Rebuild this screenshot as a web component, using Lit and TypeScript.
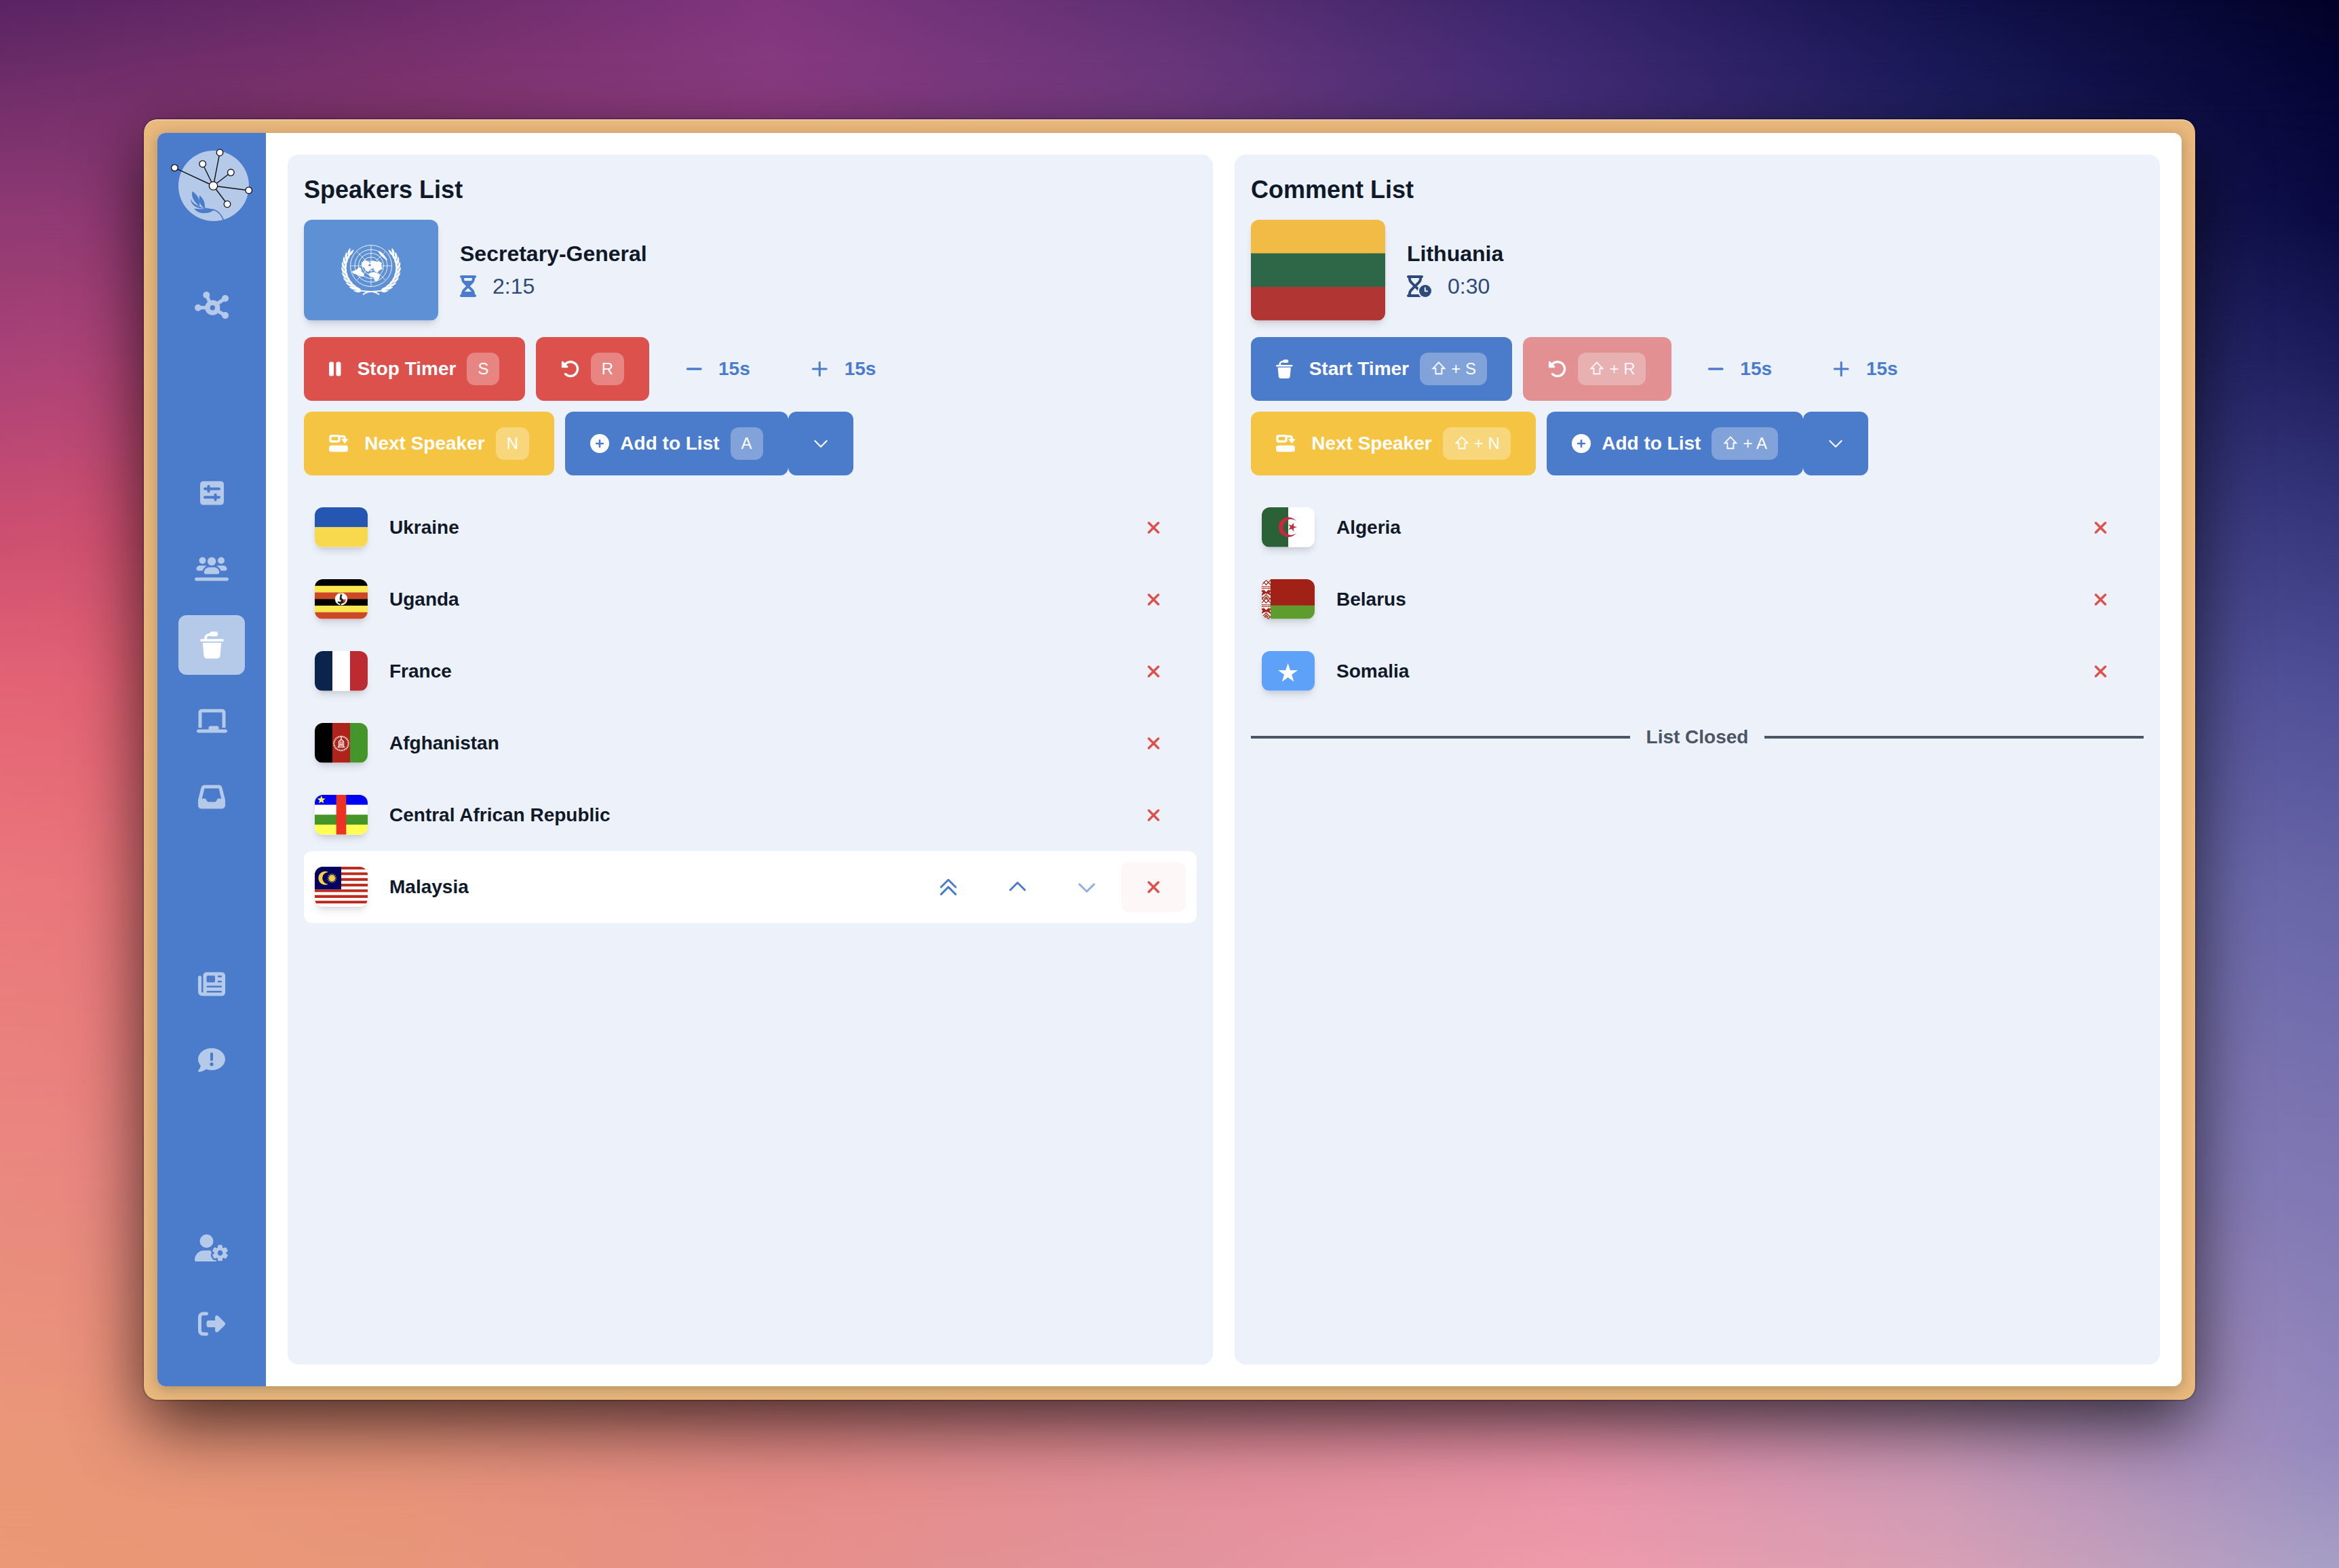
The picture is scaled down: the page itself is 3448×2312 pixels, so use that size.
import { LitElement, html, svg, css, TemplateResult } from "lit";
import { customElement, property } from "lit/decorators.js";

/* ---------- wallpaper ---------- */

const meshColumns = [0, 17, 33, 50, 67, 83, 100];
const meshRows: { y: number; colors: string[] }[] = [
  { y: 0, colors: ["#592463", "#6b2b6a", "#80367d", "#5f3073", "#36246a", "#12124c", "#020228"] },
  { y: 7, colors: ["#75306b", "#82366f", "#8b3b80", "#703a80", "#462e79", "#1e1e5e", "#050538"] },
  { y: 14, colors: ["#913a74", "#8f3a74", "#8c3b80", "#743d85", "#4d3480", "#2a2a6c", "#0a0a42"] },
  { y: 24, colors: ["#ad4377", "#b84874", "#a04480", "#804690", "#5a4090", "#38387c", "#1f1f60"] },
  { y: 34, colors: ["#cd4f70", "#d2536f", "#b85080", "#905090", "#6a4c98", "#48488c", "#38387f"] },
  { y: 44, colors: ["#e46475", "#df6072", "#c86080", "#a06090", "#8060a0", "#5c5a9c", "#4f4f98"] },
  { y: 57, colors: ["#ea787c", "#e67378", "#d07080", "#b07090", "#9070a0", "#7470ac", "#6866a8"] },
  { y: 76, colors: ["#e9897f", "#e88480", "#d88088", "#c88098", "#b080a8", "#8f80b6", "#8078b4"] },
  { y: 92, colors: ["#ea9778", "#e69379", "#e48a85", "#e28d98", "#e890a6", "#c896b6", "#9389be"] },
  { y: 100, colors: ["#e99974", "#e79679", "#e68f89", "#e2939c", "#ee9aaa", "#d8a0b4", "#a69fc6"] },
];

/* ---------- icons ---------- */

interface IconDef { w: number; h: number; body: TemplateResult }

const p = (w: number, d: string, h = 512): IconDef => ({ w, h, body: svg`<path d=${d} />` });

const podium = svg`<path d="M104 148v-20c0-40 32-66 90-72" fill="none" stroke="currentColor" stroke-width="48"/>
  <rect x="180" y="4" width="156" height="88" rx="44"/>
  <rect x="0" y="144" width="448" height="46" rx="23"/>
  <path d="M48 214H400L378 462c-3 29-26 50-54 50H124c-28 0-51-21-54-50Z"/>`;

const hourglassGlass =
  "M32 0C14.3 0 0 14.3 0 32S14.3 64 32 64V75c0 42.4 16.9 83.1 46.9 113.1L146.7 256 78.9 323.9C48.9 353.9 32 394.6 32 437v11c-17.7 0-32 14.3-32 32s14.3 32 32 32H352c17.7 0 32-14.3 32-32s-14.3-32-32-32V437c0-42.4-16.9-83.1-46.9-113.1L237.3 256l67.9-67.9c30-30 46.9-70.7 46.9-113.1V64c17.7 0 32-14.3 32-32s-14.3-32-32-32H32z";

const icons: Record<string, IconDef> = {
  hub: {
    w: 50, h: 40,
    body: svg`<g stroke="currentColor" stroke-width="5.2" fill="none">
        <path d="M17.3 5l5 11M45 10L33 18M5 23.7h12M45 35L33 28"/>
        <circle cx="26.3" cy="23.7" r="7.4" stroke-width="7.4"/></g>
      <circle cx="17.3" cy="5" r="5"/><circle cx="45" cy="10" r="5.1"/><circle cx="5" cy="23.7" r="5"/><circle cx="45" cy="35" r="5.1"/>`,
  },
  sliders: {
    w: 448, h: 512,
    body: svg`<rect y="32" width="448" height="448" rx="60"/>
      <path class="cut" d="M90 176H358M160 128V224M90 336H358M288 288V384" stroke-width="52" stroke-linecap="round"/>`,
  },
  users: p(640, "M211.2 96a64 64 0 1 0 -128 0 64 64 0 1 0 128 0zM32 256c0 17.7 14.3 32 32 32l85.6 0c10.1-39.4 38.6-71.5 75.8-86.6c-9.7-6-21.2-9.4-33.4-9.4l-96 0c-35.3 0-64 28.7-64 64zm461.6 32l82.4 0c17.7 0 32-14.3 32-32c0-35.3-28.7-64-64-64l-96 0c-11.7 0-22.7 3.1-32.1 8.6c38.1 14.8 67.4 47.3 77.7 87.4zM391.2 226.4c-6.9-1.6-14.2-2.4-21.6-2.4l-96 0c-8.5 0-16.7 1.1-24.5 3.1c-30.8 8.1-55.6 31.1-66.1 60.9c-3.5 10-5.5 20.8-5.5 32c0 17.7 14.3 32 32 32l224 0c17.7 0 32-14.3 32-32c0-11.2-1.9-22-5.5-32c-10.8-30.7-36.8-54.2-68.9-61.6zM563.2 96a64 64 0 1 0 -128 0 64 64 0 1 0 128 0zM321.6 192a80 80 0 1 0 0-160 80 80 0 1 0 0 160zM32 416c-17.7 0-32 14.3-32 32s14.3 32 32 32l576 0c17.7 0 32-14.3 32-32s-14.3-32-32-32L32 416z"),
  podium: { w: 448, h: 512, body: podium },
  board: p(576, "M96 32C60.7 32 32 60.7 32 96V384H96V96H480V384h64V96c0-35.3-28.7-64-64-64H96zM224 384v32H32c-17.7 0-32 14.3-32 32s14.3 32 32 32H544c17.7 0 32-14.3 32-32s-14.3-32-32-32H416V384c0-17.7-14.3-32-32-32H256c-17.7 0-32 14.3-32 32z"),
  inbox: p(512, "M121 32C91.6 32 66 52 58.9 80.5L1.9 308.4C.6 313.5 0 318.7 0 323.9V416c0 35.3 28.7 64 64 64H448c35.3 0 64-28.7 64-64V323.9c0-5.2-.6-10.4-1.9-15.5l-57-227.9C446 52 420.4 32 391 32H121zm0 64H391l48 192H387.8c-12.1 0-23.2 6.8-28.6 17.7l-14.3 28.6c-5.4 10.8-16.5 17.7-28.6 17.7H195.8c-12.1 0-23.2-6.8-28.6-17.7l-14.3-28.6c-5.4-10.8-16.5-17.7-28.6-17.7H73L121 96z"),
  news: p(512, "M96 96c0-35.3 28.7-64 64-64H448c35.3 0 64 28.7 64 64V416c0 35.3-28.7 64-64 64H80c-44.2 0-80-35.8-80-80V128c0-17.7 14.3-32 32-32s32 14.3 32 32V400c0 8.8 7.2 16 16 16s16-7.2 16-16V96zm64 24v80c0 13.3 10.7 24 24 24H296c13.3 0 24-10.7 24-24V120c0-13.3-10.7-24-24-24H184c-13.3 0-24 10.7-24 24zm208-8c0 8.8 7.2 16 16 16h48c8.8 0 16-7.2 16-16s-7.2-16-16-16H384c-8.8 0-16 7.2-16 16zm0 96c0 8.8 7.2 16 16 16h48c8.8 0 16-7.2 16-16s-7.2-16-16-16H384c-8.8 0-16 7.2-16 16zM160 304c0 8.8 7.2 16 16 16H432c8.8 0 16-7.2 16-16s-7.2-16-16-16H176c-8.8 0-16 7.2-16 16zm0 96c0 8.8 7.2 16 16 16H432c8.8 0 16-7.2 16-16s-7.2-16-16-16H176c-8.8 0-16 7.2-16 16z"),
  comment: {
    w: 512, h: 512,
    body: svg`<path d="M512 240c0 114.9-114.6 208-256 208c-37.1 0-72.3-6.4-104.1-17.9c-11.9 8.7-31.3 20.6-54.3 30.6C73.6 471.1 44.7 480 16 480c-6.5 0-12.3-3.9-14.8-9.9c-2.5-6-1.1-12.8 3.4-17.4l.3-.3c.3-.3 .7-.7 1.3-1.4c1.1-1.2 2.8-3.1 4.9-5.7c4.1-5 9.6-12.4 15.2-21.6c10-16.6 19.5-38.4 21.4-62.9C17.7 326.8 0 285.1 0 240C0 125.1 114.6 32 256 32s256 93.1 256 208z"/>
      <path class="cut" d="M256 138V248" stroke-width="52" stroke-linecap="round"/>
      <circle class="hole" cx="256" cy="336" r="34"/>`,
  },
  usergear: p(640, "M224 0a128 128 0 1 1 0 256A128 128 0 1 1 224 0zM178.3 304l91.4 0c11.8 0 23.4 1.2 34.5 3.3c-2.1 18.5 7.4 35.6 21.8 44.8c-16.6 10.6-26.7 31.6-20 53.3c4 12.9 9.4 25.5 16.4 37.6s15.2 23.1 24.4 33c15.7 16.9 39.6 18.4 57.2 8.7l0 .9c0 9.2 2.7 18.5 7.9 26.3L29.7 512C13.3 512 0 498.7 0 482.3C0 383.8 79.8 304 178.3 304zM436 218.2c0-7 4.5-13.3 11.3-14.8c10.5-2.4 21.5-3.7 32.7-3.7s22.2 1.3 32.7 3.7c6.8 1.5 11.3 7.8 11.3 14.8l0 30.6c7.9 3.4 15.4 7.7 22.3 12.8l24.9-14.3c6.1-3.5 13.7-2.7 18.5 2.4c7.6 8.1 14.3 17.2 20.1 27.2s10.3 20.4 13.5 31c2.1 6.7-1.1 13.7-7.2 17.2l-25 14.4c.4 4 .7 8.1 .7 12.3s-.2 8.2-.7 12.3l25 14.4c6.1 3.5 9.2 10.5 7.2 17.2c-3.3 10.6-7.8 21-13.5 31s-12.5 19.1-20.1 27.2c-4.8 5.1-12.5 5.9-18.5 2.4l-24.9-14.3c-6.9 5.1-14.3 9.4-22.3 12.8l0 30.6c0 7-4.5 13.3-11.3 14.8c-10.5 2.4-21.5 3.7-32.7 3.7s-22.2-1.3-32.7-3.7c-6.8-1.5-11.3-7.8-11.3-14.8l0-30.5c-8-3.4-15.6-7.7-22.5-12.9l-24.7 14.3c-6.1 3.5-13.7 2.7-18.5-2.4c-7.6-8.1-14.3-17.2-20.1-27.2s-10.3-20.4-13.5-31c-2.1-6.7 1.1-13.7 7.2-17.2l24.8-14.3c-.4-4.1-.7-8.2-.7-12.4s.2-8.3 .7-12.4L343.8 325c-6.1-3.5-9.2-10.5-7.2-17.2c3.3-10.6 7.7-21 13.5-31s12.5-19.1 20.1-27.2c4.8-5.1 12.4-5.9 18.5-2.4l24.8 14.3c6.9-5.1 14.5-9.4 22.5-12.9l0-30.5zm92.1 133.5a48.1 48.1 0 1 0 -96.1 0 48.1 48.1 0 1 0 96.1 0z"),
  logout: p(512, "M377.9 105.9L500.7 228.7c7.2 7.2 11.3 17.1 11.3 27.3s-4.1 20.1-11.3 27.3L377.9 406.1c-6.4 6.4-15 9.9-24 9.9c-18.7 0-33.9-15.2-33.9-33.9l0-62.1-128 0c-17.7 0-32-14.3-32-32l0-64c0-17.7 14.3-32 32-32l128 0 0-62.1c0-18.7 15.2-33.9 33.9-33.9c9 0 17.6 3.6 24 9.9zM160 96L96 96c-17.7 0-32 14.3-32 32l0 256c0 17.7 14.3 32 32 32l64 0c17.7 0 32 14.3 32 32s-14.3 32-32 32l-64 0c-53 0-96-43-96-96L0 128C0 75 43 32 96 32l64 0c17.7 0 32 14.3 32 32s-14.3 32-32 32z"),
  pause: { w: 320, h: 512, body: svg`<rect y="64" width="128" height="384" rx="46"/><rect x="192" y="64" width="128" height="384" rx="46"/>` },
  reset: p(512, "M48.5 224L40 224c-13.3 0-24-10.7-24-24L16 72c0-9.7 5.8-18.5 14.8-22.2s19.3-1.7 26.2 5.2L98.6 96.6c87.6-86.5 228.7-86.2 315.8 1c87.5 87.5 87.5 229.3 0 316.8s-229.3 87.5-316.8 0c-12.5-12.5-12.5-32.8 0-45.3s32.8-12.5 45.3 0c62.5 62.5 163.8 62.5 226.3 0s62.5-163.8 0-226.3c-62.2-62.2-162.7-62.5-225.3-1L185 183c6.9 6.9 8.9 17.2 5.2 26.2s-12.5 14.8-22.2 14.8L48.5 224z"),
  minus: { w: 448, h: 512, body: svg`<path d="M48 256H400" fill="none" stroke="currentColor" stroke-width="66" stroke-linecap="round"/>` },
  plus: { w: 448, h: 512, body: svg`<path d="M44 256H404M224 80V432" fill="none" stroke="currentColor" stroke-width="56" stroke-linecap="round"/>` },
  next: {
    w: 28, h: 28,
    body: svg`<path d="M2 4.4c0-1 .6-1.8 1.8-1.8H13c1 0 2 .8 2 1.8V9c0 1-1 1.9-2 1.9H3.8C2.600 10.900 2 10 2 9Z" fill="none" stroke="currentColor" stroke-width="3.4"/>
      <path d="M14 3.400H20.500Q23.300 3.400 23.300 6V8" fill="none" stroke="currentColor" stroke-width="3.2"/>
      <path d="M18.600 7.600H28L23.300 13.600Z" stroke="currentColor" stroke-width=".8" stroke-linejoin="round"/>
      <rect y="16.700" width="28" height="9.600" rx="3.600"/>`,
  },
  add: {
    w: 512, h: 512,
    body: svg`<circle cx="256" cy="256" r="256"/><path class="cut" d="M168 256H344M256 168V344" stroke-width="48" stroke-linecap="round"/>`,
  },
  caret: { w: 512, h: 512, body: svg`<path d="M98 184L256 342L414 184" fill="none" stroke="currentColor" stroke-width="40" stroke-linecap="round" stroke-linejoin="round"/>` },
  down: { w: 512, h: 512, body: svg`<path d="M60 180L256 376L452 180" fill="none" stroke="currentColor" stroke-width="54" stroke-linecap="round" stroke-linejoin="round"/>` },
  up: { w: 512, h: 512, body: svg`<path d="M60 334L256 138L452 334" fill="none" stroke="currentColor" stroke-width="54" stroke-linecap="round" stroke-linejoin="round"/>` },
  top: { w: 512, h: 512, body: svg`<path d="M60 256L256 60L452 256M60 450L256 254L452 450" fill="none" stroke="currentColor" stroke-width="54" stroke-linecap="round" stroke-linejoin="round"/>` },
  close: p(384, "M342.6 150.6c12.5-12.5 12.5-32.8 0-45.3s-32.8-12.5-45.3 0L192 210.7 86.6 105.4c-12.5-12.5-32.8-12.5-45.3 0s-12.5 32.8 0 45.3L146.7 256 41.4 361.4c-12.5 12.5-12.5 32.8 0 45.3s32.8 12.5 45.3 0L192 301.3 297.4 406.6c12.5 12.5 32.8 12.5 45.3 0s12.5-32.8 0-45.3L237.3 256 342.6 150.6z"),
  hourglass: p(384, hourglassGlass + "M96 75V64H288V75c0 19-5.6 37.4-16 53H112c-10.3-15.6-16-34-16-53zm16 309c3.5-5.3 7.6-10.3 12.1-14.9L192 301.3l67.9 67.9c4.6 4.6 8.6 9.6 12.2 14.9H112z"),
  hourglassclock: {
    w: 576, h: 512,
    body: svg`<path fill-rule="evenodd" d=${hourglassGlass + "M96 64H288V75c0 25.5-10.1 49.9-28.1 67.9L192 210.7l-67.9-67.9C106.1 124.8 96 100.4 96 75V64zM96 448v-11c0-25.5 10.1-49.9 28.1-67.9L192 301.3l67.9 67.9c18 18 28.1 42.4 28.1 67.9v11H96z"}/>
      <circle cx="432" cy="368" r="176" fill="#ecf1fa"/><circle cx="432" cy="368" r="144"/>
      <path d="M428 296V372H480" fill="none" stroke="#ecf1fa" stroke-width="32" stroke-linecap="round" stroke-linejoin="round"/>`,
  },
  shift: { w: 23.5, h: 24, body: svg`<path d="M11.900 2.400L20.300 11.200H16.400V19.300H7.400V11.200H3.500Z" fill="none" stroke="currentColor" stroke-width="1.900"/>` },
};

const icon = (name: string, height: number, cls = "") => {
  const d = icons[name];
  return html`<svg class="icon ${cls}" width=${(d.w / d.h) * height} height=${height} viewBox="0 0 ${d.w} ${d.h}" fill="currentColor">${d.body}</svg>`;
};

/* ---------- flags, drawn on an 80 x 60 field ---------- */

const star = (cx: number, cy: number, r: number, fill: string, turn = -90, points = 5, inner = 0.382) => {
  const pts: string[] = [];
  for (let i = 0; i < points * 2; i++) {
    const a = ((turn + (i * 180) / points) * Math.PI) / 180;
    const q = i % 2 ? r * inner : r;
    pts.push(`${(cx + q * Math.cos(a)).toFixed(2)},${(cy + q * Math.sin(a)).toFixed(2)}`);
  }
  return svg`<polygon points=${pts.join(" ")} fill=${fill} />`;
};

const bandsH = (colors: string[]) =>
  colors.map((c, i) => svg`<rect y=${(60 / colors.length) * i} width="80" height=${60 / colors.length + (i < colors.length - 1 ? 0.3 : 0)} fill=${c}/>`);
const bandsV = (colors: string[]) =>
  colors.map((c, i) => svg`<rect x=${(80 / colors.length) * i} width=${80 / colors.length + 0.1} height="60" fill=${c}/>`);

const unEmblem = () => {
  const leaves: TemplateResult[] = [];
  // laurel branch: pairs of leaves following an arc left of the globe
  for (let i = 0; i < 10; i++) {
    const t = 112 + i * 11;
    const a = (t * Math.PI) / 180;
    const x = 99 + 39 * Math.cos(a);
    const y = 71.5 + 36.5 * Math.sin(a);
    leaves.push(svg`<g transform="translate(${x} ${y}) rotate(${t})">
      <path d="M0 0C3.600 1 4.600 6 3.600 11C1.300 9 -.4 5 0 0Z"/><path d="M-.6 0C-3.800 2 -4 7 -2.400 11.500C-.1 9 .4 4 -.6 0Z"/></g>`);
  }
  const branch = svg`<g>${leaves}<path d="M111 110.500C101 101 86 111 70 98" fill="none" stroke="#fff" stroke-width="1.800"/></g>`;
  return svg`<rect width="198" height="148.500" fill="#5e90d6"/>
    <g fill="#fff">${branch}<g transform="translate(198 0) scale(-1 1)">${branch}</g></g>
    <g fill="none" stroke="#fff" stroke-width="1" opacity=".9">
      ${[7, 13, 18.5, 24, 30.5].map((r) => svg`<circle cx="99" cy="68" r=${r}/>`)}
      <path d="M99 37.500V98.500M68.500 68H129.500M77.400 46.400L120.600 89.600M120.600 46.400L77.400 89.600" stroke-width=".8"/></g>
    <g fill="#fff">
      <path d="M85 63l5-3 5 1 2 3 4-4 6 2 4-1 4 3-1 4 2 4-5 3-3 3-4-2-1-5-5 2-3 4-4-2-2-4-4-3Z"/>
      <path d="M71 76l6-2 4-4 3 1 1 5 4 4-1 4-6-1-4-2-6-2Z"/>
      <path d="M96 79l7-2 6 2 3 3-1 5-4 4-3-1-1-5-5-1-3-3Z"/>
      <path d="M109 46l4 1 6 6 4 6-1 1-5-4-5-5Z"/></g>
    <circle cx="97" cy="67" r="1.800" fill="#5e90d6"/>`;
};

const flags: Record<string, () => unknown> = {
  lithuania: () => bandsH(["#f2bb46", "#2d6748", "#b03533"]),
  ukraine: () => bandsH(["#2556b2", "#f8d84c"]),
  uganda: () => svg`${bandsH(["#000", "#fbe74f", "#cd4826", "#000", "#fbe74f", "#cd4826"])}
    <circle cx="40" cy="30" r="9.400" fill="#fff"/>
    <path d="M39 22.500l3 1.500-1.500 2 .5 3 4 3-1 4-4.500 1.500 1 2h-2l-.5-2-3.500-2 .5-2 4 .5 1-1.500-2.500-2 .5-4Z" fill="#222"/>
    <path d="M43 31l4-1-1 5-2.500 1Z" fill="#cd4826"/><path d="M37 22l3-2 2 1.500-2 1Z" fill="#cdb53a"/>`,
  france: () => bandsV(["#0a244c", "#ffffff", "#bc2b31"]),
  afghanistan: () => svg`${bandsV(["#000", "#ae241a", "#45962a"])}
    <g fill="none" stroke="#fff" opacity=".85">
      <ellipse cx="40" cy="31" rx="11" ry="10.600" stroke-width="2.400" stroke-dasharray="1.800 .9"/>
      <path d="M34.500 36.500h11M36 33.500h8M36.500 36v-8l3.500-3 3.500 3v8M40 20v5" stroke-width="1.600"/>
      <path d="M38.500 29h3v3h-3z" stroke-width="1.200"/></g>`,
  car: () => svg`${bandsH(["#0002f5", "#ffffff", "#449629", "#ffff54"])}
    <rect x="32.500" width="15" height="60" fill="#eb3223"/>${star(10, 7.6, 6.4, "#ffff54", -90, 5, 0.42)}`,
  malaysia: () => svg`${Array.from({ length: 14 }, (_, i) => svg`<rect y=${(60 / 14) * i} width="80" height=${60 / 14} fill=${i % 2 ? "#fff" : "#bd2a1e"}/>`)}
    <rect width="40" height="34.300" fill="#000060"/>
    <path d="M20.500 8.200A10.200 10.200 0 1 0 20.500 26.200A9 9 0 1 1 20.500 8.200Z" fill="#f7d048"/>
    ${star(26, 17.3, 8, "#f7d048", -90, 14, 0.5)}`,
  algeria: () => svg`${bandsV(["#2a6137", "#ffffff"])}
    <path d="M52.200 20.800A15 15 0 1 0 52.200 39.200A12 12 0 1 1 52.200 20.800Z" fill="#c32a3c"/>
    ${star(46, 30, 7, "#c32a3c", 0)}`,
  belarus: () => svg`<rect width="80" height="40" fill="#a22116"/><rect y="39.700" width="80" height="20.300" fill="#5d9c2d"/>
    <rect width="13.300" height="60" fill="#fff"/>
    <g fill="none" stroke="#a22116">
      ${[0, 27.5].map((y) => svg`<g transform="translate(0 ${y})" stroke-width="1.300">
        <path d="M0 1.500L3.300 5L6.600 1.500L10 5L13.300 1.500M0 8.500L3.300 5L6.600 8.500L10 5L13.300 8.500"/>
        <path d="M0 11.300h13.300M0 13.800h13.300" stroke-width="1.500" stroke-dasharray="1.700 .6"/>
        <path d="M0 17L3.300 20.500L0 24M13.300 17L10 20.500L13.300 24M3.600 22.800V18L6.600 21L9.700 18V22.800" stroke-width="2.400"/>
        <path d="M0 30L6.600 23.500L13.300 30M3.300 30L6.600 26.800L10 30M0 26.500L1.800 28"/></g>`)}
      <path d="M0 56.500L3.300 60M6.600 56.500L3.300 60M6.600 56.500L10 60M13.300 56.500L10 60" stroke-width="1.300"/></g>`,
  somalia: () => svg`<rect width="80" height="60" fill="#5da2f8"/>${star(39.6, 33.8, 15.6, "#fff")}`,
};

const flag = (name: string, cls: string) =>
  name === "un"
    ? html`<svg class=${cls} viewBox="0 0 198 148.500" preserveAspectRatio="none">${unEmblem()}</svg>`
    : html`<svg class=${cls} viewBox="0 0 80 60" preserveAspectRatio="none">${flags[name]()}</svg>`;

/* ---------- sidebar ---------- */

@customElement("side-nav")
export class SideNav extends LitElement {
  static styles = css`
    :host { display: flex; flex-direction: column; width: 160px; flex: none; background: #4b7bcb; color: #b5c9e9; border-radius: 12px 0 0 12px; }
    .logo { display: block; width: 160px; height: 210px; flex: none; }
    .groups { display: flex; flex-direction: column; gap: 188.6px; }
    .group { display: flex; flex-direction: column; gap: 24px; align-items: center; }
    .item { display: flex; align-items: center; justify-content: center; width: 98px; height: 88px; border-radius: 12px; }
    .active { background: #b5c9e9; color: #fff; }
    .icon { display: block; }
    .cut { fill: none; stroke: #4b7bcb; }
    .hole { fill: #4b7bcb; }
  `;
  private groups = [["hub"], ["sliders", "users", "podium", "board", "inbox"], ["news", "comment"], ["usergear", "logout"]];
  render() {
    const nodes = [[25.4, 51.4], [66.7, 45.7], [92, 29], [108.3, 58.3], [134.7, 84.7], [103, 105]];
    return html`
      <svg class="logo" viewBox="0 0 160 210">
        <circle cx="83" cy="78" r="52" fill="#b5c9e9" />
        <g fill="#4b7bcb">
          <path d="M51.500 86C60 92 63.500 99 62 108.500C54 101 49.500 95 51.500 86Z" />
          <path d="M49 97C52 105 59 107 69 111.500C58 112 49 106 49 97Z" />
          <path d="M62.500 92C68.500 98 70.500 103 70 112C63 107 60 100 62.500 92Z" />
          <path d="M54 111.500C62 113 70 111 84 113.500C75 120.500 60 120 54 111.500Z" />
        </g>
        <path d="M68 111L84 113.500Q93 117 97.500 128.500" fill="none" stroke="#4b7bcb" stroke-width="1.800" />
        <g stroke="#111" stroke-width="1.400">${nodes.map(([x, y]) => svg`<path d="M82.500 78L${x} ${y}"/>`)}</g>
        <g fill="#fff" stroke="#111" stroke-width="1.300">
          ${nodes.map(([x, y]) => svg`<circle cx=${x} cy=${y} r="4.800"/>`)}
          <circle cx="82.500" cy="78" r="6.200" />
        </g>
      </svg>
      <nav class="groups">
        ${this.groups.map((g) => html`<div class="group">
          ${g.map((n) => html`<div class="item ${n === "podium" ? "active" : ""}">${icon(n, 40)}</div>`)}
        </div>`)}
      </nav>`;
  }
}

/* ---------- speaker panel ---------- */

interface Row { flag: string; name: string; hover?: boolean }
interface PanelData {
  title: string; flag: string; speaker: string; time: string; timeIcon: string;
  running: boolean; shift: boolean; closed: boolean; rows: Row[];
}

@customElement("speaker-panel")
export class SpeakerPanel extends LitElement {
  static styles = css`
    :host { display: flex; flex-direction: column; flex: 1 1 0; min-width: 0; box-sizing: border-box; padding: 24px; border-radius: 16px; background: #ecf1fa; color: #101929; }
    .icon { display: block; flex: none; }
    .title { margin: 0; font-size: 36px; line-height: 56px; font-weight: 700; }
    .current { display: flex; align-items: center; gap: 32px; margin-top: 16px; }
    .bigflag, .smallflag { display: block; flex: none; border-radius: 12px; box-shadow: 0 8px 12px -2px rgba(0, 0, 0, .1), 0 4px 8px -4px rgba(0, 0, 0, .1); }
    .bigflag { width: 198px; height: 148.5px; }
    .smallflag { width: 78px; height: 58.5px; }
    .who { font-size: 32px; line-height: 48px; }
    .name { font-weight: 700; }
    .time { display: flex; align-items: center; gap: 24px; color: #2e4a7a; }
    .run { color: #4b7bcb; }
    .buttons { display: flex; gap: 16px; margin-top: 24px; }
    .buttons + .buttons { margin-top: 16px; }
    .btn { display: flex; align-items: center; box-sizing: border-box; height: 94px; padding: 0 37.2px; border-radius: 12px; font-size: 28px; line-height: 40px; font-weight: 700; color: #fff; white-space: nowrap; }
    .red { background: #dd514c; }
    .blue { background: #4b7bcb; }
    .yellow { background: #f5c443; }
    .ghost { color: #4b7bcb; }
    .disabled { opacity: .6; }
    .label { margin-left: 24px; }
    .near { margin-left: 16px; }
    .split { display: flex; }
    .caret { width: 96px; padding: 0; justify-content: center; }
    .cut { fill: none; stroke: #4b7bcb; }
    .kbd { display: flex; align-items: center; height: 48px; margin-left: 16px; padding: 0 16px; border-radius: 12px; background: rgba(255, 255, 255, .3); font-size: 24px; font-weight: 400; white-space: pre; }
    .rows { margin-top: 24px; }
    .row { display: flex; align-items: center; box-sizing: border-box; height: 106px; padding: 0 16px; border-radius: 12px; font-size: 28px; font-weight: 700; }
    .hover { background: #fff; }
    .country { flex: 1; margin-left: 32px; }
    .act { display: flex; align-items: center; justify-content: center; width: 102px; height: 74px; color: #4b7bcb; }
    .remove { width: 95px; color: #dd514c; border-radius: 12px; }
    .hover .remove { background: #fdf7f7; }
    .closed { display: flex; align-items: center; gap: 24px; margin-top: 24px; font-size: 28px; line-height: 40px; font-weight: 700; color: #4b5563; }
    .rule { flex: 1; height: 4px; background: #4b5563; }
  `;
  @property({ attribute: false }) data!: PanelData;

  private kbd(key: string) {
    return html`<span class="kbd">${this.data.shift ? html`${icon("shift", 24)}<span> + ${key}</span>` : key}</span>`;
  }

  render() {
    const d = this.data;
    return html`
      <h2 class="title">${d.title}</h2>
      <div class="current">
        ${flag(d.flag, "bigflag")}
        <div class="who">
          <div class="name">${d.speaker}</div>
          <div class="time">${icon(d.timeIcon, 32, d.running ? "run" : "")}<span>${d.time}</span></div>
        </div>
      </div>
      <div class="buttons">
        <div class="btn ${d.running ? "red" : "blue"}">
          ${icon(d.running ? "pause" : "podium", 28)}<span class="label">${d.running ? "Stop Timer" : "Start Timer"}</span>${this.kbd("S")}
        </div>
        <div class="btn red ${d.running ? "" : "disabled"}">${icon("reset", 28)}${this.kbd("R")}</div>
        <div class="btn ghost">${icon("minus", 28)}<span class="label">15s</span></div>
        <div class="btn ghost">${icon("plus", 28)}<span class="label">15s</span></div>
      </div>
      <div class="buttons">
        <div class="btn yellow">${icon("next", 28)}<span class="label">Next Speaker</span>${this.kbd("N")}</div>
        <div class="split">
          <div class="btn blue">${icon("add", 28)}<span class="near">Add to List</span>${this.kbd("A")}</div>
          <div class="btn blue caret">${icon("caret", 28)}</div>
        </div>
      </div>
      <div class="rows">
        ${d.rows.map((r) => html`<div class="row ${r.hover ? "hover" : ""}">
          ${flag(r.flag, "smallflag")}<span class="country">${r.name}</span>
          ${r.hover
            ? html`<span class="act">${icon("top", 28)}</span><span class="act">${icon("up", 28)}</span><span class="act disabled">${icon("down", 28)}</span>`
            : ""}
          <span class="act remove">${icon("close", 28)}</span>
        </div>`)}
      </div>
      ${d.closed ? html`<div class="closed"><span class="rule"></span><span>List Closed</span><span class="rule"></span></div>` : ""}
    `;
  }
}

/* ---------- page ---------- */

@customElement("app-root")
export class AppRoot extends LitElement {
  static styles = css`
    :host { display: block; position: relative; box-sizing: border-box; width: 3448px; height: 2312px; padding: 176px 212px 248px; overflow: hidden; font-family: "Liberation Sans", Arial, Helvetica, sans-serif; }
    .wall { position: absolute; inset: 0; }
    .frame { position: relative; display: flex; box-sizing: border-box; height: 1888px; padding: 20px; border-radius: 20px; background: #e8b87d; box-shadow: 0 0 3px rgba(0, 0, 0, .7), 0 36px 100px rgba(0, 0, 0, .7), inset 0 2px 1px -1px rgba(255, 240, 215, .9); }
    .window { display: flex; flex: 1; border-radius: 12px; background: #fff; box-shadow: 0 4px 20px rgba(0, 0, 0, .24); }
    .main { display: flex; flex: 1; gap: 32px; padding: 32px; }
  `;

  private panels: PanelData[] = [
    {
      title: "Speakers List", flag: "un", speaker: "Secretary-General", time: "2:15", timeIcon: "hourglass",
      running: true, shift: false, closed: false,
      rows: [
        { flag: "ukraine", name: "Ukraine" },
        { flag: "uganda", name: "Uganda" },
        { flag: "france", name: "France" },
        { flag: "afghanistan", name: "Afghanistan" },
        { flag: "car", name: "Central African Republic" },
        { flag: "malaysia", name: "Malaysia", hover: true },
      ],
    },
    {
      title: "Comment List", flag: "lithuania", speaker: "Lithuania", time: "0:30", timeIcon: "hourglassclock",
      running: false, shift: true, closed: true,
      rows: [
        { flag: "algeria", name: "Algeria" },
        { flag: "belarus", name: "Belarus" },
        { flag: "somalia", name: "Somalia" },
      ],
    },
  ];

  render() {
    return html`
      ${meshRows.map((r, i) => {
        const fill = `linear-gradient(to right, ${r.colors.map((c, k) => `${c} ${meshColumns[k]}%`).join(", ")})`;
        const mask = i ? `linear-gradient(to bottom, transparent ${meshRows[i - 1].y}%, #000 ${r.y}%)` : "none";
        return html`<div class="wall" style="background:${fill};mask-image:${mask}"></div>`;
      })}
      <div class="frame">
        <div class="window">
          <side-nav></side-nav>
          <main class="main">${this.panels.map((d) => html`<speaker-panel .data=${d}></speaker-panel>`)}</main>
        </div>
      </div>`;
  }
}
